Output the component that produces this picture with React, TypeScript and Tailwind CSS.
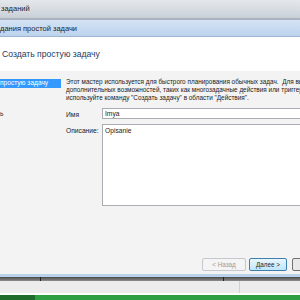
import React from 'react';

const App = () => {
  return (
    <div
      className="w-[300px] h-[300px] overflow-hidden flex flex-col bg-[#f0f0f0] text-black"
      style={{ fontFamily: '"Liberation Sans", Arial, sans-serif' }}
    >
      {/* outer window title */}
      <div className="h-[18px] shrink-0 flex items-center bg-gradient-to-b from-[#e4e7eb] via-[#d8dde3] to-[#c9cfd7] text-[7.5px] text-[#1e1e1e] pl-[1px]">
        заданий
      </div>
      <div className="h-[2px] shrink-0 bg-[#aab3bf]" />

      {/* wizard title */}
      <div className="h-[17px] shrink-0 flex items-center pt-[1px] bg-gradient-to-b from-[#d4e3f4] to-[#bcd3ed] text-[7.5px] text-[#1e1e1e] border-b border-[#9fb5cf]">
        дания простой задачи
      </div>

      {/* header */}
      <div className="h-[34px] shrink-0 bg-white flex items-center pl-[2px] pt-[1px] text-[8.6px] text-[#1e3a5f]">
        Создать простую задачу
      </div>

      {/* body */}
      <div className="flex-1 flex min-w-0 bg-[#f3f3f3]">
        <div className="w-[62px] shrink-0 pt-[8px] text-[6.6px]">
          <div className="h-[9px] w-[61px] bg-[#3399ff] text-white flex items-center leading-none">простую задачу</div>
          <div className="mt-[23px] leading-none text-[#333]">ь</div>
        </div>
        <div className="flex-1 min-w-0 overflow-hidden flex flex-col pl-[4px] pt-[7px] text-[6.4px] leading-[8px] text-[#222]">
          <p className="whitespace-nowrap">
            Этот мастер используется для быстрого планирования обычных задач.&nbsp; Для выбо
            <br />
            дополнительных возможностей, таких как многозадачные действия или триггеры
            <br />
            используйте команду "Создать задачу" в области "Действия".
          </p>
          <div className="flex mt-[6px] -mr-[4px] text-[6.7px]">
            <div className="w-[36px] shrink-0 pt-[3px]">Имя</div>
            <div className="flex-1 h-[11px] bg-white border border-[#abadb3] pl-[2px] flex items-center">Imya</div>
          </div>
          <div className="flex mt-[5px] -mr-[4px] text-[6.7px]">
            <div className="w-[36px] shrink-0 pt-[3px]">Описание:</div>
            <div className="flex-1 h-[82px] bg-white border border-[#abadb3] pl-[2px] pt-[2px]">Opisanie</div>
          </div>
          <div className="flex-1" />
          <div className="flex gap-[3px] mb-[3px] ml-[136px] text-[6.3px]">
            <div className="w-[44px] shrink-0 h-[13px] border border-[#c5c9cf] rounded-[2px] bg-[#f4f4f4] text-[#9a9a9a] flex items-center justify-center">
              &lt; Назад
            </div>
            <div className="w-[38px] shrink-0 h-[13px] border border-[#3c7fb1] rounded-[2px] bg-gradient-to-b from-[#eaf6fd] to-[#bee6fd] flex items-center justify-center">
              Далее &gt;
            </div>
            <div className="w-[30px] shrink-0 ml-[2px] h-[13px] border border-[#707070] rounded-[2px] bg-[#e9e9e9]" />
          </div>
        </div>
      </div>

      {/* window frame bottom */}
      <div className="h-[3px] shrink-0 bg-[#b9d1ea]" />
      <div className="h-[4px] shrink-0 bg-gradient-to-b from-[#4a4a4a] to-[#8d8d8d] flex">
        <div className="w-[40px]" />
        <div className="w-[1px] bg-[#222]" />
        <div className="w-[182px]" />
        <div className="w-[1px] bg-[#222]" />
      </div>
      <div className="h-[12px] shrink-0 bg-[#ececec] flex">
        <div className="w-[240px] border-r border-[#d0d0d0]" />
      </div>
      <div className="h-[2px] shrink-0 bg-white" />
      <div className="h-[5px] shrink-0 bg-[#2ea043] flex">
        <div className="w-[35px] bg-[#1e6b2b]" />
      </div>
    </div>
  );
};

export default App;
